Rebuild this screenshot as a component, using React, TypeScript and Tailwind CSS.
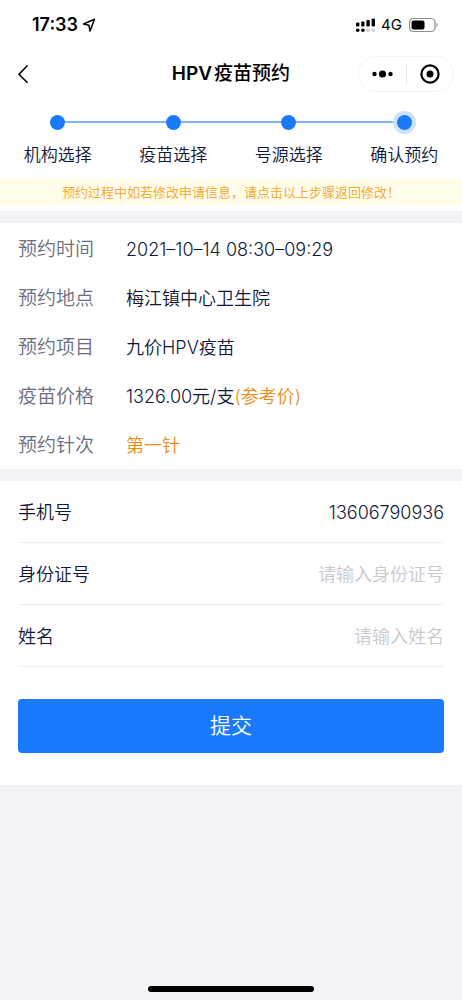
import { useState } from "react";

type Step = {
    id: number;
    label: string;
}

type Info = {
    label: string;
    value: string;
    note?: string;
    highlight?: boolean;
}

const steps: Step[] = [
    { id: 1, label: "机构选择" },
    { id: 2, label: "疫苗选择" },
    { id: 3, label: "号源选择" },
    { id: 4, label: "确认预约" },
];

const infos: Info[] = [
    { label: "预约时间", value: "2021–10–14 08:30–09:29" },
    { label: "预约地点", value: "梅江镇中心卫生院" },
    { label: "预约项目", value: "九价HPV疫苗" },
    { label: "疫苗价格", value: "1326.00元/支", note: "(参考价)" },
    { label: "预约针次", value: "第一针", highlight: true },
];

const StatusBar = () => {
    return (
        <div className="flex h-[50px] items-center justify-between pl-8 pr-[22px] text-black">
            <div className="flex items-center gap-1">
                <span className="text-lg font-semibold">17:33</span>
                <svg className="h-4 w-4" viewBox="0 0 16 16" fill="none" stroke="currentColor" strokeWidth="1.5" strokeLinejoin="round">
                    <path d="M12.500 2.200 1.500 7l5.400 1.200L8 14z" />
                </svg>
            </div>
            <div className="flex items-center gap-1.5">
                <svg className="h-4 w-5" viewBox="0 0 20 16" fill="currentColor">
                    <rect x="1" y="5.500" width="3.4" height="4" rx="1" />
                    <rect x="6.200" y="4.500" width="3.4" height="5" rx="1" />
                    <rect x="11.400" y="3" width="3.4" height="6.5" rx="1" />
                    <rect x="16.600" y="1.500" width="3.4" height="8" rx="1" />
                    <circle cx="2.700" cy="13.300" r="1.8" />
                    <circle cx="7.900" cy="13.300" r="1.8" />
                    <circle cx="13.100" cy="13.300" r="1.8" fill="#cfcfcf" />
                    <circle cx="18.200" cy="13.300" r="1.8" fill="#cfcfcf" />
                </svg>
                <span className="text-[15px] font-normal">4G</span>
                <svg className="h-4 w-8" viewBox="0 0 32 16">
                    <rect x="1.500" y="1.5" width="25.500" height="13" rx="4" fill="none" stroke="#8e8e8e" strokeWidth="1.2" />
                    <rect x="3.500" y="3.5" width="13" height="9" rx="2" />
                    <path d="M28.500 6v4c1.600-.6 1.600-3.400 0-4z" fill="#8e8e8e" />
                </svg>
            </div>
        </div>
    );
}

const NavBar = () => {
    return (
        <header className="grid h-12 grid-cols-[1fr_auto_1fr] items-center px-2 text-black">
            <button type="button" aria-label="返回" className="ml-2 w-6">
                <svg className="h-6 w-4" viewBox="0 0 16 24" fill="none" stroke="currentColor" strokeWidth="1.6">
                    <path d="M11.500 3.500 3 12.200l8.500 8.600" />
                </svg>
            </button>
            <h1 className="text-[19px] font-medium"><span className="mr-0.5 font-semibold">HPV</span>疫苗预约</h1>
            <div className="flex h-9 w-24 items-center justify-self-end rounded-full border border-gray-100">
                <button type="button" aria-label="更多" className="flex flex-1 justify-center">
                    <svg className="h-6 w-6" viewBox="0 0 24 24" fill="currentColor">
                        <circle cx="4.500" cy="12" r="2.200" />
                        <circle cx="12.500" cy="12" r="3.600" />
                        <circle cx="20.500" cy="12" r="2.200" />
                    </svg>
                </button>
                <span className="h-5 w-px bg-gray-200"></span>
                <button type="button" aria-label="关闭" className="flex flex-1 justify-center">
                    <svg className="h-6 w-6" viewBox="0 0 24 24">
                        <circle cx="12" cy="12" r="8.600" fill="none" stroke="currentColor" strokeWidth="2.200" />
                        <circle cx="12" cy="12" r="3.500" fill="currentColor" />
                    </svg>
                </button>
            </div>
        </header>
    );
}

const StepList = ({ current }: { current: number }) => {
    return (
        <ol className="flex pt-3">
            {steps.map((step, index) => (
                <li className="flex-1" key={step.id}>
                    <button type="button" className="flex w-full flex-col items-center gap-2">
                        <span className="flex h-6 w-full items-center">
                            <span className={index === 0 ? "h-0.5 flex-1" : "h-0.5 flex-1 bg-[#7fb4fb]"}></span>
                            <span className={step.id === current ? "rounded-full bg-[#cfe2fd] p-1" : ""}>
                                <span className="block h-[15px] w-[15px] rounded-full bg-[#1a7afe]"></span>
                            </span>
                            <span className={index === steps.length - 1 ? "h-0.5 flex-1" : "h-0.5 flex-1 bg-[#7fb4fb]"}></span>
                        </span>
                        <span className="text-[17px] leading-[26px]">{step.label}</span>
                    </button>
                </li>
            ))}
        </ol>
    );
}

const InfoList = () => {
    return (
        <dl className="bg-white px-[18px] pb-px">
            {infos.map(item => (
                <div className="flex h-[49px] items-baseline pt-1 leading-[45px]" key={item.label}>
                    <dt className="w-[108px] text-[19px] text-[#6b6d80]">{item.label}</dt>
                    <dd className={item.highlight ? "text-[18px] text-[#ee8a12]" : "text-[18px]"}>
                        {item.value}
                        {item.note && <span className="text-[#ee8a12]">{item.note}</span>}
                    </dd>
                </div>
            ))}
        </dl>
    );
}

type FieldProps = {
    id: string;
    label: string;
    type?: string;
    value: string;
    placeholder?: string;
    onChange: (value: string) => void;
}

const Field = ({ id, label, type = "text", value, placeholder, onChange }: FieldProps) => {
    return (
        <div className="flex h-[62px] items-center border-b border-[#efedf1] pt-0.5 text-lg">
            <label htmlFor={id} className="shrink-0">{label}</label>
            <input
                id={id}
                type={type}
                value={value}
                placeholder={placeholder}
                onChange={e => onChange(e.target.value)}
                className="min-w-0 flex-1 bg-transparent text-right outline-none placeholder:text-[#c9cace]"
            />
        </div>
    );
}

export default function App() {

    const [phone, setPhone] = useState("13606790936");
    const [idCard, setIdCard] = useState("");
    const [name, setName] = useState("");

    return (
        <div className="flex min-h-screen flex-col bg-[#f4f2f6] font-['Inter','Noto_Sans_CJK_SC',sans-serif] font-[350] text-[#10173a]">
            <div className="bg-white pb-1.5">
                <StatusBar />
                <NavBar />
                <StepList current={4} />
                <p className="mt-[11px] bg-[#fffcea] text-center text-[13px] leading-[26px] text-[#f5a41f]">
                    预约过程中如若修改申请信息，请点击以上步骤返回修改！
                </p>
            </div>

            <main className="mt-3 flex flex-col gap-3">
                <InfoList />

                <form className="bg-white px-[18px] pb-8" onSubmit={e => e.preventDefault()}>
                    <Field id="phone" label="手机号" type="tel" value={phone} onChange={setPhone} />
                    <Field id="idCard" label="身份证号" value={idCard} placeholder="请输入身份证号" onChange={setIdCard} />
                    <Field id="name" label="姓名" value={name} placeholder="请输入姓名" onChange={setName} />
                    <button type="submit" className="mt-8 h-[54px] w-full rounded bg-[#1a7afe] text-[21px] text-white">提交</button>
                </form>
            </main>

            <div className="mt-auto flex justify-center pb-2">
                <span className="h-1.5 w-[166px] rounded-full bg-black"></span>
            </div>
        </div>
    );
}
